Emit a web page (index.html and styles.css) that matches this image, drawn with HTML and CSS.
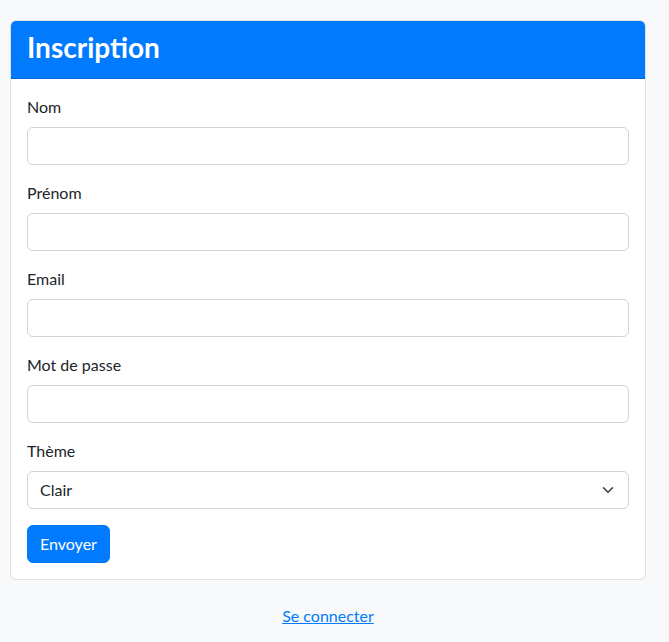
FILE: index.html
```html
<!DOCTYPE html>
<html lang="fr">
<head>
<meta charset="utf-8">
<title>Inscription</title>
<link rel="stylesheet" href="styles.css">
</head>
<body>
<main class="page">
  <section class="card">
    <header class="card-header"><h1 class="title">Inscription</h1></header>
    <form class="card-body">
      <div class="group">
        <label class="label" for="nom">Nom</label>
        <input class="control" id="nom" type="text">
      </div>
      <div class="group">
        <label class="label" for="prenom">Prénom</label>
        <input class="control" id="prenom" type="text">
      </div>
      <div class="group">
        <label class="label" for="email">Email</label>
        <input class="control" id="email" type="email">
      </div>
      <div class="group">
        <label class="label" for="mdp">Mot de passe</label>
        <input class="control" id="mdp" type="password">
      </div>
      <div class="group">
        <label class="label" for="theme">Thème</label>
        <div class="select-wrap">
          <select class="control select" id="theme"><option>Clair</option><option>Sombre</option></select>
          <svg class="chevron" width="16" height="16" viewBox="0 0 16 16"><path d="M2 5l6 6 6-6" fill="none" stroke="#343a40" stroke-width="2" stroke-linecap="round" stroke-linejoin="round"/></svg>
        </div>
      </div>
      <button class="btn" type="button">Envoyer</button>
    </form>
  </section>
  <div class="footer"><a class="link" href="#">Se connecter</a></div>
</main>
</body>
</html>
```
FILE: styles.css
```css
html, body { margin: 0; padding: 0; }
body {
  background: #f8f9fa;
  color: #212529;
  font-family: Lato, "Noto Sans", sans-serif;
  font-size: 16px;
  line-height: 1.5;
}
.page { width: 636px; padding: 20px 0 0 10px; }
.card {
  background: #fff;
  border: 1px solid rgba(0,0,0,.125);
  border-radius: 6px;
  overflow: hidden;
}
.card-header {
  background: #007bff;
  border-bottom: 1px solid #0069d9;
  padding: 10px 16px 14px;
}
.title {
  margin: 0;
  color: #fff;
  font-size: 28px;
  font-weight: 700;
  line-height: 33px;
}
.card-body { padding: 16px; }
.group { margin-bottom: 16px; }
.label { display: block; margin-bottom: 8px; font-size: 16px; line-height: 24px; }
.control {
  display: block;
  box-sizing: border-box;
  width: 100%;
  height: 38px;
  padding: 6px 12px;
  font: inherit;
  color: #212529;
  background: #fff;
  border: 1px solid #ced4da;
  border-radius: 6px;
}
.select-wrap { position: relative; }
.select { appearance: none; -webkit-appearance: none; }
.chevron { position: absolute; right: 15px; top: 13px; width: 12px; height: 12px; }
.btn {
  font: inherit;
  color: #fff;
  background: #007bff;
  border: 1px solid #007bff;
  border-radius: 6px;
  height: 38px;
  padding: 6px 12px;
}
.footer { text-align: center; margin-top: 24px; }
.link { color: #007bff; text-decoration: underline; }
```
